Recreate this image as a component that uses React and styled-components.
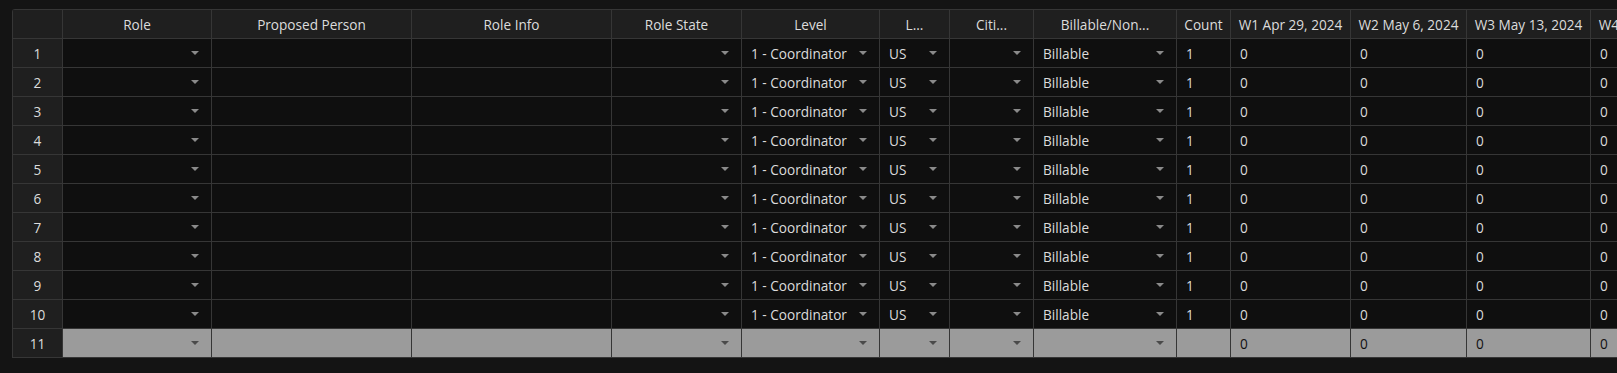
import React from "react";
import styled, { createGlobalStyle } from "styled-components";

const GlobalStyle = createGlobalStyle`
  html, body {
    margin: 0;
    padding: 0;
    background: #141414;
    overflow: hidden;
  }
  body {
    font-family: "Open Sans", "Noto Sans", sans-serif;
    font-size: 13.6px;
  }
`;

// column widths including the right border
const COLUMNS = [
  { key: "num", title: "", width: 50 },
  { key: "role", title: "Role", width: 149, select: true },
  { key: "person", title: "Proposed Person", width: 200 },
  { key: "info", title: "Role Info", width: 200 },
  { key: "state", title: "Role State", width: 130, select: true },
  { key: "level", title: "Level", width: 138, select: true },
  { key: "loc", title: "L...", width: 70, select: true },
  { key: "citi", title: "Citi...", width: 84, select: true },
  { key: "bill", title: "Billable/Non...", width: 143, select: true },
  { key: "count", title: "Count", width: 54 },
  { key: "w1", title: "W1 Apr 29, 2024", width: 120 },
  { key: "w2", title: "W2 May 6, 2024", width: 116 },
  { key: "w3", title: "W3 May 13, 2024", width: 124 },
  { key: "w4", title: "W4 May 20, 2024", width: 124 },
];

const Page = styled.div`
  padding: 9px 0 0 12px;
`;

const Grid = styled.div`
  display: grid;
  grid-template-columns: ${props => props.cols};
  width: max-content;
  border-top: 1px solid #363636;
  border-left: 1px solid #363636;
  border-top-left-radius: 3px;
  background: #0f0f0f;
  color: #dcdcdc;
`;

const HeaderCell = styled.div`
  height: 29px;
  box-sizing: border-box;
  display: flex;
  align-items: center;
  justify-content: center;
  background: #1f1f1f;
  border-right: 1px solid #363636;
  border-bottom: 1px solid #363636;
  white-space: nowrap;
  overflow: hidden;
`;

const Cell = styled.div`
  height: 29px;
  box-sizing: border-box;
  display: flex;
  align-items: center;
  justify-content: ${props => (props.center ? "center" : "space-between")};
  padding: ${props => (props.center ? "0" : "0 12px 0 9px")};
  background: ${props =>
    props.rowHead ? "#1f1f1f" : props.blank ? "#9b9b9b" : "#0f0f0f"};
  color: ${props => (props.blank && !props.rowHead ? "#111" : "#dcdcdc")};
  border-right: 1px solid #363636;
  border-bottom: 1px solid #363636;
  white-space: nowrap;
  overflow: hidden;
`;

const Caret = styled.span`
  width: 0;
  height: 0;
  border-left: 4px solid transparent;
  border-right: 4px solid transparent;
  border-top: 4px solid ${props => (props.blank ? "#4a4a4a" : "#8a8a8a")};
  flex-shrink: 0;
`;

const ROWS = Array.from({ length: 10 }, () => ({
  level: "1 - Coordinator",
  loc: "US",
  bill: "Billable",
  count: "1",
  w1: "0",
  w2: "0",
  w3: "0",
  w4: "0",
}));

const BLANK = { w1: "0", w2: "0", w3: "0", w4: "0" };

export default function App() {
  const rows = [...ROWS, BLANK];
  const cols = COLUMNS.map(c => `${c.width}px`).join(" ");
  return (
    <Page>
      <GlobalStyle />
      <Grid cols={cols}>
        {COLUMNS.map(col => (
          <HeaderCell key={col.key}>{col.title}</HeaderCell>
        ))}
        {rows.map((row, i) => {
          const blank = i === rows.length - 1;
          return COLUMNS.map(col =>
            col.key === "num" ? (
              <Cell key={`${i}-num`} rowHead center blank={blank}>
                {i + 1}
              </Cell>
            ) : (
              <Cell key={`${i}-${col.key}`} blank={blank}>
                <span>{row[col.key] || ""}</span>
                {col.select && <Caret blank={blank} />}
              </Cell>
            )
          );
        })}
      </Grid>
    </Page>
  );
}
